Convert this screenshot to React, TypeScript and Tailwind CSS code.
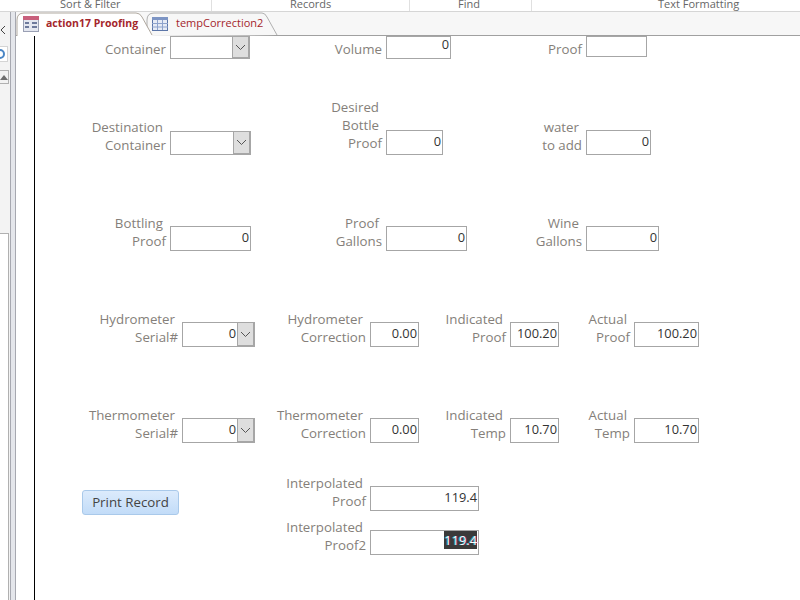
const labelClass = "text-right text-[13.3px] leading-[18px] text-[#857f7a]";

function Chevron() {
  return (
    <svg width="11" height="7" viewBox="0 0 11 7" fill="none" stroke="#555" strokeWidth="1">
      <path d="M1 1l4.5 4.5L10 1" />
    </svg>
  );
}

function Field({
  label,
  value,
  labelW,
  boxW,
  h = "h-[25px]",
  combo,
  boxClass = "",
  valueClass = "pt-[1px]",
  labelClassName = "pb-[1px]",
  children,
}: {
  label: string[];
  value?: string;
  labelW: string;
  boxW: string;
  h?: string;
  combo?: boolean;
  boxClass?: string;
  valueClass?: string;
  labelClassName?: string;
  children?: React.ReactNode;
}) {
  return (
    <div className="flex items-end">
      <div className={labelW + " " + labelClass + " pr-1 " + labelClassName}>
        {label.map((l, i) => (
          <div key={l} className={i < label.length - 1 ? "whitespace-nowrap pr-[3px]" : "whitespace-nowrap"}>
            {l}
          </div>
        ))}
      </div>
      <div
        className={
          boxW + " " + h + " " + boxClass + " flex shrink-0 overflow-hidden border border-[#a6a6a6] bg-white text-[12.8px] text-[#333]"
        }
      >
        <div className={"flex-1 pr-[1px] text-right leading-[18px] " + valueClass}>{children ?? value}</div>
        {combo && (
          <div className="flex w-[17px] items-center justify-center border-r border-b border-l border-[#a6a6a6] bg-[#dedede]">
            <Chevron />
          </div>
        )}
      </div>
    </div>
  );
}

function Tabs() {
  return (
    <div className="relative h-[24px] border-b border-[#a0a0a0] bg-[#f7f7f7]">
      <svg width="280" height="24" viewBox="0 0 280 24" className="absolute left-0 top-0">
        <path d="M131 24V8Q131 1 138 1H246Q249 1 251 5L261 23" fill="#f7f7f7" stroke="#b0b0b0" />
        <path d="M1 24V8Q1 1 8 1H120Q124 1 126 5L136 24Z" fill="#fff" />
        <path d="M1 24V8Q1 1 8 1H120Q124 1 126 5L136 23" fill="none" stroke="#b0a9a0" />
      </svg>
      <div className="relative flex h-[23px] items-center">
        <svg width="16" height="16" viewBox="0 0 16 16" className="ml-[7px] mr-[7px]">
          <rect x="0.5" y="0.5" width="15" height="15" fill="#e4e7f0" stroke="#9aa0b4" />
          <rect x="0" y="0" width="16" height="4" fill="#c8607c" />
          <path d="M2 7h4M2 11h4M9 7h5M9 11h5" stroke="#6d7a9c" strokeWidth="2" />
        </svg>
        <span className="w-[106px] text-[10.5px] font-bold text-[#a4262c]">action17 Proofing</span>
        <svg width="16" height="14" viewBox="0 0 16 14" className="mr-[8px]">
          <rect x="0.5" y="0.5" width="15" height="13" fill="#e6ebf5" stroke="#5b75a8" />
          <rect x="0" y="0" width="16" height="3" fill="#7d95c4" />
          <path d="M5.5 3v10M10.5 3v10M0 6.5h16M0 10h16" stroke="#8ea3cc" />
        </svg>
        <span className="text-[11px] text-[#a4262c]">tempCorrection2</span>
      </div>
    </div>
  );
}

function NavPane() {
  return (
    <div className="flex w-[16px] shrink-0">
      <div className="flex w-[10px] flex-col bg-[#f3f3f3]">
        <div className="flex h-[22px] items-end">
          <svg width="6" height="10" viewBox="0 0 6 10" fill="none" stroke="#444" className="-mb-[1px]">
            <path d="M5 1L1 5l4 4" />
          </svg>
        </div>
        <div className="h-[12px]" />
        <div className="flex h-[16px] w-[8px] items-center overflow-hidden border border-l-0 border-[#d4d4d4] bg-white">
          <div className="-ml-[7px] h-[10px] w-[12px] shrink-0 rounded-full border-2 border-[#4a86c5]" />
        </div>
        <div className="h-[8px]" />
        <div className="flex h-[14px] w-[9px] items-center justify-end border border-l-0 border-[#b0b0b0] bg-[#f2f2f2]">
          <svg width="8" height="5" viewBox="0 0 8 5">
            <path d="M0 5L4 0l4 5z" fill="#6e6e6e" />
          </svg>
        </div>
        <div className="h-[149px]" />
        <div className="w-[9px] flex-1 border-t border-r border-[#b0b0b0] bg-white" />
      </div>
      <div className="w-[6px] border-x border-[#a6a8b0] bg-[#e4e6eb]" />
    </div>
  );
}

export default function App() {
  return (
    <div className="flex h-[600px] w-[800px] flex-col overflow-hidden bg-white font-['Open_Sans',sans-serif]">
      <div className="flex h-[12px] border-b border-[#d6d6d6] bg-white text-[11px] leading-[7px] text-[#666]">
        <div className="w-[212px] border-r border-[#e0e0e0] pl-[60px]">Sort &amp; Filter</div>
        <div className="w-[198px] border-r border-[#e0e0e0] pl-[78px]">Records</div>
        <div className="w-[122px] border-r border-[#e0e0e0] pl-[48px]">Find</div>
        <div className="flex-1 pl-[126px]">Text Formatting</div>
      </div>

      <div className="flex flex-1">
        <NavPane />

        <div className="flex flex-1 flex-col">
          <Tabs />
          <div className="flex flex-1">
            <div className="w-[19px] border-r border-black" />
            <div className="flex-1">
              <div className="flex h-[23px] items-end">
                <Field label={["Container"]} labelW="w-[135px]" boxW="w-[80px]" h="h-[23px]" combo valueClass="" />
                <Field label={["Volume"]} value="0" labelW="w-[136px]" boxW="w-[65px]" h="h-[23px]" valueClass="-mt-[2px]" />
                <Field label={["Proof"]} labelW="w-[135px]" boxW="w-[61px]" h="h-[21px]" boxClass="mb-[2px]" />
              </div>

              <div className="flex h-[96px] items-end">
                <Field label={["Destination", "Container"]} labelW="w-[135px]" boxW="w-[81px]" h="h-[24px]" combo />
                <Field label={["Desired", "Bottle", "Proof"]} value="0" labelW="w-[135px]" boxW="w-[57px]" labelClassName="pb-[3px]" />
                <Field label={["water", "to add"]} value="0" labelW="w-[143px]" boxW="w-[65px]" />
              </div>

              <div className="flex h-[96px] items-end">
                <Field label={["Bottling", "Proof"]} value="0" labelW="w-[135px]" boxW="w-[81px]" />
                <Field label={["Proof", "Gallons"]} value="0" labelW="w-[135px]" boxW="w-[81px]" />
                <Field label={["Wine", "Gallons"]} value="0" labelW="w-[119px]" boxW="w-[73px]" />
              </div>

              <div className="flex h-[96px] items-end">
                <Field label={["Hydrometer", "Serial#"]} value="0" labelW="w-[147px]" boxW="w-[73px]" combo />
                <Field label={["Hydrometer", "Correction"]} value="0.00" labelW="w-[115px]" boxW="w-[49px]" />
                <Field label={["Indicated", "Proof"]} value="100.20" labelW="w-[91px]" boxW="w-[49px]" />
                <Field label={["Actual", "Proof"]} value="100.20" labelW="w-[75px]" boxW="w-[65px]" />
              </div>

              <div className="flex h-[96px] items-end">
                <Field label={["Thermometer", "Serial#"]} value="0" labelW="w-[147px]" boxW="w-[73px]" combo />
                <Field label={["Thermometer", "Correction"]} value="0.00" labelW="w-[115px]" boxW="w-[49px]" />
                <Field label={["Indicated", "Temp"]} value="10.70" labelW="w-[91px]" boxW="w-[49px]" />
                <Field label={["Actual", "Temp"]} value="10.70" labelW="w-[75px]" boxW="w-[65px]" />
              </div>

              <div className="flex h-[68px] items-end">
                <button className="ml-[47px] -mb-[4px] h-[25px] w-[97px] rounded-[3px] border border-[#a9c9ea] bg-gradient-to-b from-[#dcebfc] to-[#c2dcf8] pb-[2px] text-[13.3px] leading-[18px] text-[#444]">
                  Print Record
                </button>
                <Field label={["Interpolated", "Proof"]} value="119.4" labelW="w-[191px]" boxW="w-[109px]" />
              </div>

              <div className="flex h-[44px] items-end">
                <Field label={["Interpolated", "Proof2"]} labelW="w-[335px]" boxW="w-[109px]" valueClass="">
                  <span className="inline-block h-[18px] bg-[#3a3a3a] text-white [text-shadow:-1px_0_0_rgba(0,255,255,0.55),1px_0_0_rgba(255,0,255,0.35)]">
                    119.4
                  </span>
                </Field>
              </div>
            </div>
          </div>
        </div>
      </div>
    </div>
  );
}
